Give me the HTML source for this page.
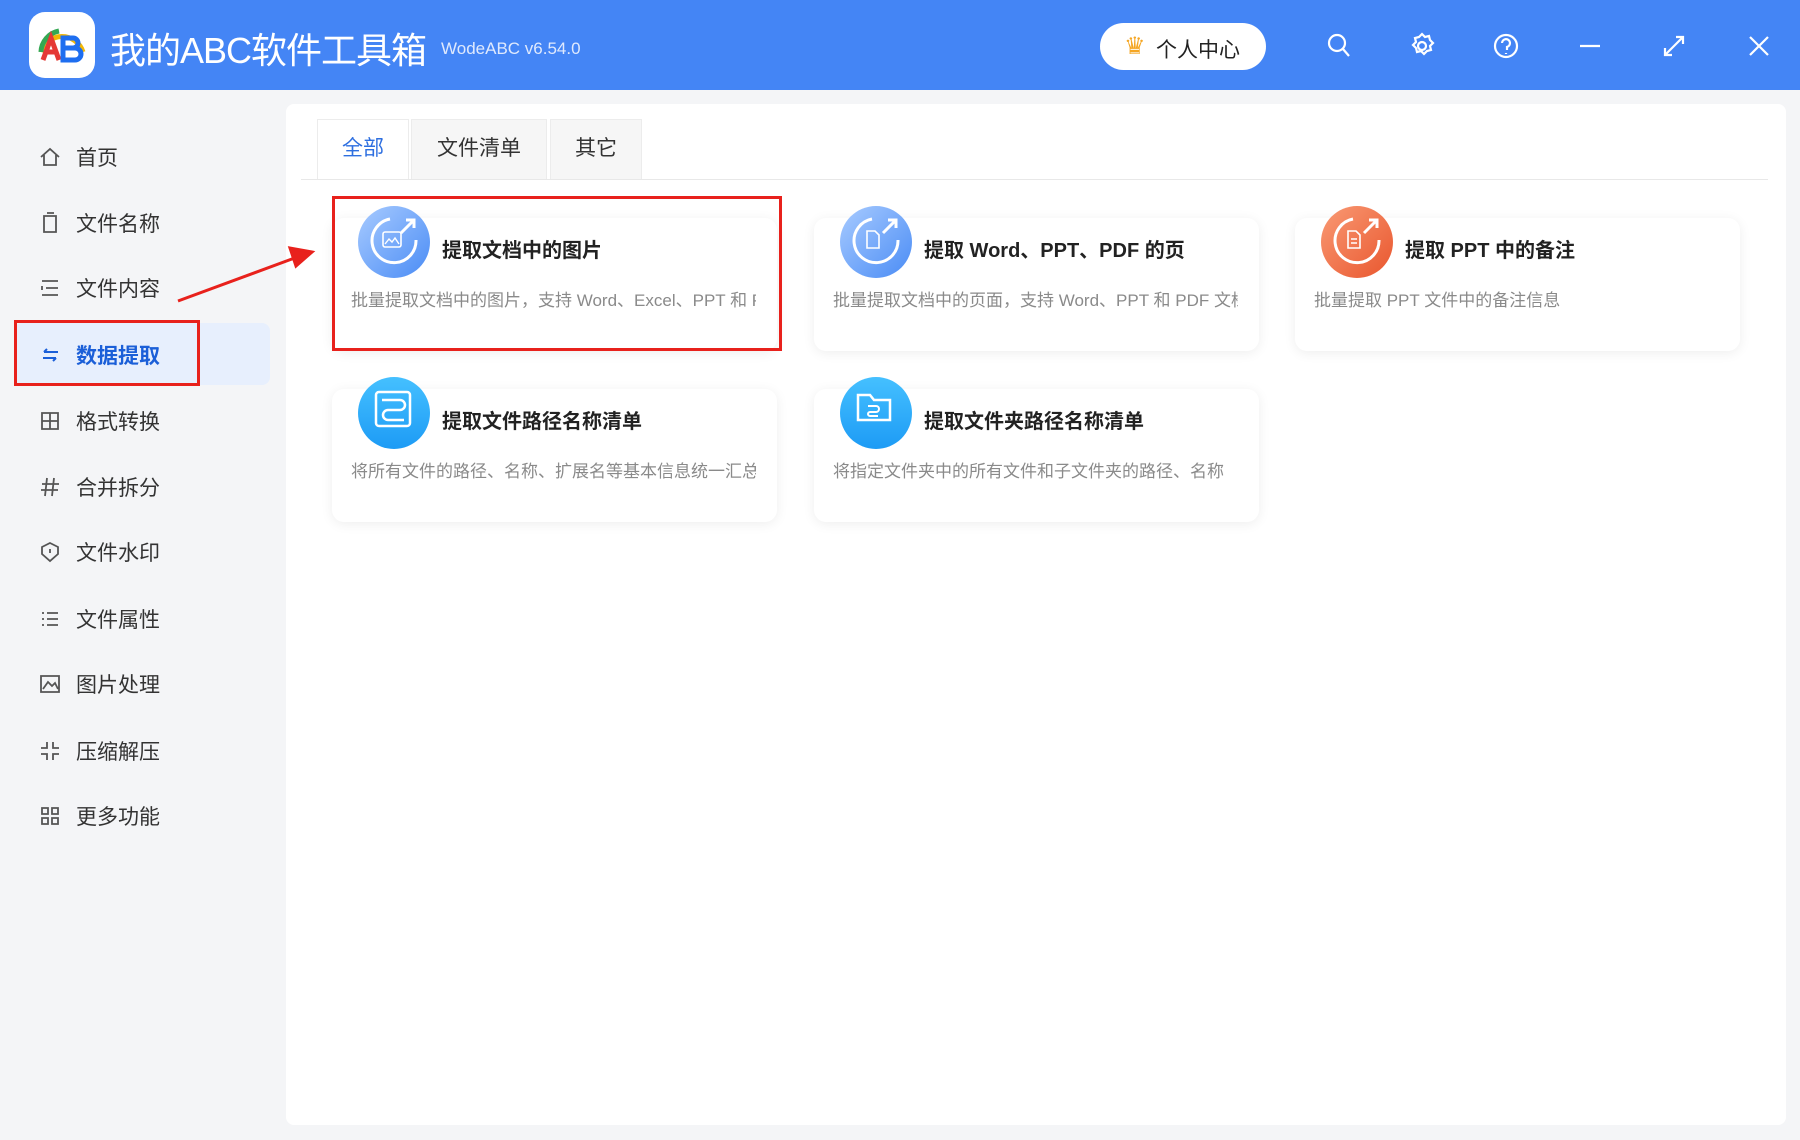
<!DOCTYPE html>
<html><head><meta charset="utf-8"><style>
*{box-sizing:border-box;margin:0;padding:0}
body{width:1800px;height:1140px;overflow:hidden;background:#f4f5f7;font-family:"Liberation Sans","Noto Sans CJK SC",sans-serif;position:relative}
.hdr{position:absolute;left:0;top:0;width:1800px;height:90px;background:#4485f5}
.abs{position:absolute}
.logo{left:29px;top:12px;width:66px;height:66px;background:#fff;border-radius:16px}
.title{left:110px;top:22px;color:#fff;font-size:36px;white-space:nowrap;letter-spacing:-1px}
.ver{left:441px;top:39px;color:#dfe9fd;font-size:17px}
.btn{left:1100px;top:23px;width:166px;height:47px;background:#fff;border-radius:24px;font-size:21px;color:#222;padding:11px 0 0 56px}
.item{position:absolute;left:38px;height:30px;display:flex;align-items:center;font-size:21px;color:#333}
.item svg{width:24px;height:24px;margin-right:14px;flex:none}
.panel{left:286px;top:104px;width:1500px;height:1021px;background:#fff;border-radius:8px}
.tab{position:absolute;top:119px;height:60px;background:#f6f6f6;border:1px solid #ececec;border-bottom:none;font-size:21px;color:#333;text-align:center;line-height:58px}
.card{position:absolute;width:445px;height:133px;background:#fff;border-radius:12px;box-shadow:0 2px 12px rgba(0,0,0,.07)}
.circ{position:absolute;left:26px;top:-12px;width:72px;height:72px;border-radius:50%}
.ct{position:absolute;left:110px;top:16px;font-size:20px;font-weight:bold;color:#222;white-space:nowrap}
.cd{position:absolute;left:19px;top:68px;width:405px;overflow:hidden;white-space:nowrap;font-size:17px;color:#8a8a8a}
</style></head><body>
<div class="hdr"></div>
<div class="abs logo"><svg width="66" height="66" viewBox="0 0 66 66"><path d="M12 40 A22 22 0 0 1 54 40" fill="none" stroke="#f2b705" stroke-width="5"/><path d="M12 40 A22 22 0 0 1 30 19" fill="none" stroke="#34a853" stroke-width="5"/><path d="M14 48 L22 26 L30 48 M17 40 H27" fill="none" stroke="#e53935" stroke-width="5"/><path d="M34 26 H44 a5 5 0 0 1 0 10 H34 Z M34 36 H46 a6 6 0 0 1 0 12 H34 Z" fill="none" stroke="#1e6ef0" stroke-width="5"/></svg></div>
<div class="abs title">我的ABC软件工具箱</div>
<div class="abs ver">WodeABC v6.54.0</div>
<div class="abs btn"><span style="position:absolute;left:24px;top:9px;font-size:24px;color:#f5a623">♛</span>个人中心</div>
<svg class="abs" style="left:1320px;top:28px" width="460" height="36" viewBox="0 0 460 36" fill="none" stroke="#fff" stroke-width="2.2">
<circle cx="17" cy="15" r="8"/><path d="M23 21 L29 28"/>
<circle cx="102" cy="18" r="4"/><path d="M102 6 l3 3 4-1 1 4 3 3-3 3 1 4-4 1-3 3-3-3-4 1-1-4-3-3 3-3-1-4 4-1z"/>
<circle cx="186" cy="18" r="11"/><path d="M182 15 a4 4 0 1 1 5 4 v3 M186 25 v1"/>
<path d="M260 18 H280"/>
<path d="M345 27 L363 9 M356 9 H363 V16 M345 20 V27 H352"/>
<path d="M430 9 L448 27 M448 9 L430 27"/>
</svg>
<div class="abs" style="left:14px;top:323px;width:256px;height:62px;background:#e7effd;border-radius:8px"></div>
<div class="item" style="top:142px"><svg viewBox="0 0 24 24" fill="none" stroke="#555" stroke-width="1.8"><path d="M3 12 L12 4 L21 12 M6 10 V20 H18 V10"/></svg>首页</div>
<div class="item" style="top:208px"><svg viewBox="0 0 24 24" fill="none" stroke="#555" stroke-width="1.8"><path d="M6 5 H18 V21 H6 Z M9 2 H16"/></svg>文件名称</div>
<div class="item" style="top:273px"><svg viewBox="0 0 24 24" fill="none" stroke="#555" stroke-width="1.8"><path d="M4 5 H20 M8 12 H20 M4 19 H20 M4 10 v4"/></svg>文件内容</div>
<div class="item" style="top:340px;font-weight:bold;color:#1b5fd8"><svg viewBox="0 0 24 24" fill="none" stroke="#1b5fd8" stroke-width="2"><path d="M6 9 H20 M6 9 l3 -3 M18 15 H5 M18 15 l-3 3"/></svg>数据提取</div>
<div class="item" style="top:406px"><svg viewBox="0 0 24 24" fill="none" stroke="#555" stroke-width="1.8"><path d="M4 4 H20 V20 H4 Z M12 4 V20 M4 12 H20"/></svg>格式转换</div>
<div class="item" style="top:472px"><svg viewBox="0 0 24 24" fill="none" stroke="#555" stroke-width="1.8"><path d="M9 3 l-2 18 M16 3 l-2 18 M4 9 H21 M3 15 H20"/></svg>合并拆分</div>
<div class="item" style="top:537px"><svg viewBox="0 0 24 24" fill="none" stroke="#555" stroke-width="1.8"><path d="M12 3 L20 7 V14 L12 21 L4 14 V7 Z M12 9 v4"/></svg>文件水印</div>
<div class="item" style="top:604px"><svg viewBox="0 0 24 24" fill="none" stroke="#555" stroke-width="1.8"><path d="M4 6 h2 M9 6 H20 M4 12 h2 M9 12 H20 M4 18 h2 M9 18 H20"/></svg>文件属性</div>
<div class="item" style="top:669px"><svg viewBox="0 0 24 24" fill="none" stroke="#555" stroke-width="1.8"><path d="M3 4 H21 V20 H3 Z M5 17 L10 10 L14 14 L17 11 L20 17"/></svg>图片处理</div>
<div class="item" style="top:736px"><svg viewBox="0 0 24 24" fill="none" stroke="#555" stroke-width="1.8"><path d="M9 3 V9 H3 M15 3 V9 H21 M9 21 V15 H3 M15 21 V15 H21"/></svg>压缩解压</div>
<div class="item" style="top:801px"><svg viewBox="0 0 24 24" fill="none" stroke="#555" stroke-width="1.8"><path d="M4 4 H10 V10 H4 Z M14 4 H20 V10 H14 Z M4 14 H10 V20 H4 Z M14 14 H20 V20 H14 Z"/></svg>更多功能</div>
<div class="abs" style="left:14px;top:320px;width:186px;height:66px;border:3px solid #e8211c"></div>
<div class="abs panel"></div>
<div class="tab" style="left:317px;width:92px;background:#fff;color:#2e6fe0">全部</div>
<div class="tab" style="left:411px;width:136px">文件清单</div>
<div class="tab" style="left:550px;width:92px">其它</div>
<div class="abs" style="left:301px;top:179px;width:1467px;height:1px;background:#e8e8e8"></div>
<div class="card" style="left:332px;top:218px"><div class="circ" style="background:linear-gradient(135deg,#a8cbff,#4a8cf5)"></div><div class="ct">提取文档中的图片</div><div class="cd">批量提取文档中的图片，支持 Word、Excel、PPT 和 PDF</div></div>
<div class="card" style="left:814px;top:218px"><div class="circ" style="background:linear-gradient(135deg,#a8cbff,#4a8cf5)"></div><div class="ct">提取 Word、PPT、PDF 的页</div><div class="cd">批量提取文档中的页面，支持 Word、PPT 和 PDF 文档</div></div>
<div class="card" style="left:1295px;top:218px"><div class="circ" style="background:linear-gradient(135deg,#f99a74,#e9562e)"></div><div class="ct">提取 PPT 中的备注</div><div class="cd">批量提取 PPT 文件中的备注信息</div></div>
<div class="card" style="left:332px;top:389px"><div class="circ" style="background:linear-gradient(180deg,#45c0ff,#1d9bf5)"></div><div class="ct">提取文件路径名称清单</div><div class="cd">将所有文件的路径、名称、扩展名等基本信息统一汇总</div></div>
<div class="card" style="left:814px;top:389px"><div class="circ" style="background:linear-gradient(180deg,#45c0ff,#1d9bf5)"></div><div class="ct">提取文件夹路径名称清单</div><div class="cd">将指定文件夹中的所有文件和子文件夹的路径、名称</div></div>
<svg class="abs" style="left:0;top:0" width="1800" height="600" fill="none" stroke="#fff" stroke-width="3">
<path d="M390 219 A22 22 0 1 0 416 240"/><path d="M401 233 L414 220 M406 220 H414 V228"/>
<rect x="383" y="232" width="18" height="15" rx="2" stroke-width="1.6"/><path d="M385 244 l4-5 3 3 3-4 4 6" stroke-width="1.4"/>
<path d="M872 219 A22 22 0 1 0 898 240"/><path d="M883 233 L896 220 M888 220 H896 V228"/>
<path d="M867 231 h8 l4 4 v13 h-12 Z" stroke-width="1.6"/>
<path d="M1353 219 A22 22 0 1 0 1379 240"/><path d="M1364 233 L1377 220 M1369 220 H1377 V228"/>
<path d="M1348 231 h8 l4 4 v13 h-12 Z M1351 239 h6 M1351 243 h6" stroke-width="1.6"/>
<rect x="376" y="392" width="34" height="34" rx="3" stroke-width="2.5"/><path d="M382 400 H400 a5 5 0 0 1 0 10 H388 a5 5 0 0 0 0 10 H404" stroke-width="2.5"/>
<path d="M858 395 H870 L874 400 H890 V420 H858 Z" stroke-width="2.5"/><path d="M868 406 h8 a3 3 0 0 1 0 6 h-6 a2 2 0 0 0 0 4 h8" stroke-width="2"/>
<path d="M178 301 L300 256" stroke="#e8211c" stroke-width="3"/><path d="M312 252 L290 248 L296 266 Z" fill="#e8211c" stroke="#e8211c"/>
</svg>
<div class="abs" style="left:332px;top:196px;width:450px;height:155px;border:3px solid #e8211c"></div>
</body></html>
